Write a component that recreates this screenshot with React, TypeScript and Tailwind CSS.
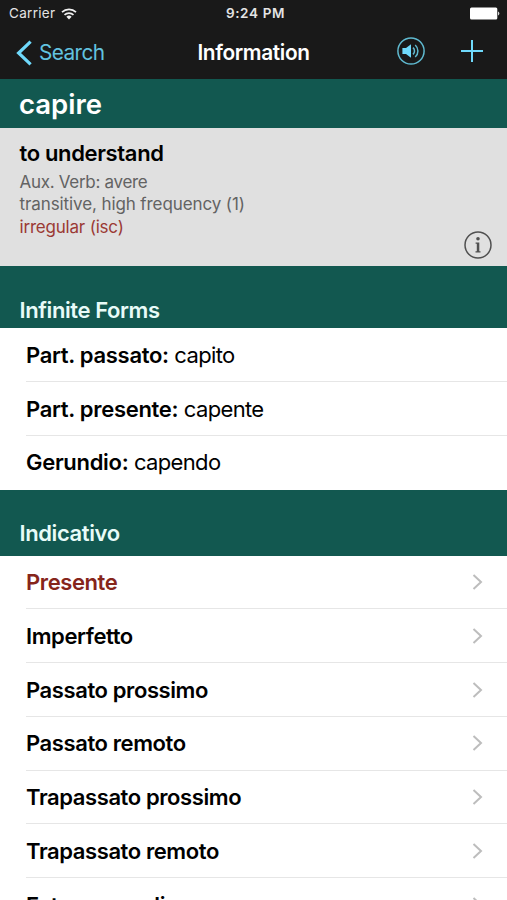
import type { ReactNode } from "react";

const infiniteForms = [
  { label: "Part. passato:", value: "capito" },
  { label: "Part. presente:", value: "capente" },
  { label: "Gerundio:", value: "capendo" },
];

const tenses = [
  { name: "Presente", irregular: true },
  { name: "Imperfetto" },
  { name: "Passato prossimo" },
  { name: "Passato remoto" },
  { name: "Trapassato prossimo" },
  { name: "Trapassato remoto" },
  { name: "Futuro semplice" },
];

const StatusBar = () => (
  <div className="grid h-[27px] grid-cols-[1fr_auto_1fr] items-center pl-[9px] pr-[7px] text-[13.5px] leading-none text-[#e4e4e4]">
    <div className="flex items-center gap-[6px]">
      <span className="tracking-[0.3px]">Carrier</span>
      <svg width="16" height="12" viewBox="0 0 16 12" fill="none" stroke="#f0f0f0" strokeWidth="1.7">
        <path d="M1 4.2a10.2 10.2 0 0 1 14 0" />
        <path d="M3.5 6.8a6.6 6.6 0 0 1 9 0" />
        <path d="M8 11.4 5.4 8.7a3.8 3.8 0 0 1 5.2 0Z" fill="#f0f0f0" stroke="none" />
      </svg>
    </div>
    <span className="pl-[2px] pt-px text-center font-semibold tracking-[0.65px]">9:24 PM</span>
    <svg className="justify-self-end" width="30" height="13" viewBox="0 0 30 13" fill="#fff">
      <rect x="0" y="0.5" width="27.3" height="12" rx="1.5" />
      <path d="M28.2 4.5a2.4 2.4 0 0 1 0 4Z" />
    </svg>
  </div>
);

const NavBar = () => (
  <div className="grid h-[52px] grid-cols-[1fr_auto_1fr] items-center pl-4 pr-[24px] text-[20.8px] leading-none">
    <div className="flex items-center gap-[7px] text-[#62c3e0]">
      <svg className="mb-[1px]" width="16" height="26" viewBox="0 0 16 26" fill="none" stroke="#6fd9fb" strokeWidth="3.2">
        <path d="M14.6 1.6 2.6 13l12 11.4" />
      </svg>
      <span className="tracking-[-0.6px]">Search</span>
    </div>
    <span className="pl-[8px] text-center font-semibold tracking-[-0.35px] text-white">Information</span>
    <div className="mb-[4px] flex items-center justify-end gap-[36px]">
      <svg width="28" height="28" viewBox="0 0 28 28" fill="none" stroke="#5fb9cf" strokeWidth="1.5">
        <circle cx="14" cy="14" r="13.1" />
        <path d="M5.4 11h3.6L14 7.2v13.6L9 17H5.4Z" fill="#6fd9fb" stroke="none" />
        <path d="M16 10.6a4.6 4.6 0 0 1 0 6.8" />
        <path d="M18.2 8a8 8 0 0 1 0 12" />
      </svg>
      <svg width="22" height="22" viewBox="0 0 22 22" stroke="#6fd9fb" strokeWidth="2">
        <path d="M0 11h22M11 0v22" />
      </svg>
    </div>
  </div>
);

const Chevron = () => (
  <svg width="12" height="16" viewBox="0 0 12 16" fill="none" stroke="#bdbdbd" strokeWidth="2">
    <path d="M1.5 1 9 8l-7.5 7" />
  </svg>
);

const SectionTitle = ({ children }: { children: ReactNode }) => (
  <h3 className="pl-[19.5px] text-[22px] font-semibold leading-[27px] tracking-[-0.4px] text-[#e8fbf8]">
    {children}
  </h3>
);

const Row = ({ children }: { children: ReactNode }) => (
  <li className="ml-[26px] flex h-[53.75px] items-center justify-between border-b border-[#e6e6e6] pr-[23px] last:border-transparent">
    {children}
  </li>
);

export default function App() {
  return (
    <div className="h-[900px] w-[507px] overflow-hidden bg-white font-['Inter','Liberation_Sans',sans-serif] text-black">
      <header className="bg-[#191919]">
        <StatusBar />
        <NavBar />
      </header>

      <div className="flex h-[49px] items-center bg-[#125850] pl-[19px] pt-[2px] text-[27.5px] font-semibold leading-none text-white">
        <h1>capire</h1>
      </div>

      {/* Translation and grammar notes */}
      <section className="flex h-[137.5px] justify-between bg-[#e0e0e0] pl-[19.5px] pr-[15px]">
        <div className="pt-[12px] text-[17px] leading-[22px] tracking-[-0.2px] text-[#636363]">
          <h2 className="mb-[5px] text-[22px] font-semibold leading-[26px] tracking-[-0.35px] text-black">
            to understand
          </h2>
          <p className="tracking-[-0.3px]">Aux. Verb: avere</p>
          <p className="tracking-[-0.1px]">transitive, high frequency (1)</p>
          <p className="leading-[24px] text-[#9b3a35]">irregular (isc)</p>
        </div>
        <svg className="mb-[6.5px] self-end" width="28" height="28" viewBox="0 0 28 28">
          <circle cx="14" cy="14" r="13" fill="none" stroke="#505050" strokeWidth="1.5" />
          <circle cx="14" cy="7.8" r="1.8" fill="#505050" />
          <path d="M11.6 11.6h3.7v8.7h1.2v1.2h-5v-1.2h1.3v-7.5h-1.2Z" fill="#505050" />
        </svg>
      </section>

      <div className="flex h-[62.9px] flex-col justify-end bg-[#125850] pb-[4.9px]">
        <SectionTitle>Infinite Forms</SectionTitle>
      </div>
      <ul>
        {infiniteForms.map((form) => (
          <Row key={form.label}>
            <p className="text-[22px] leading-none tracking-[-0.65px]">
              <b className="font-semibold tracking-[-0.3px]">{form.label}</b> {form.value}
            </p>
          </Row>
        ))}
      </ul>

      <div className="flex h-[66px] flex-col justify-end bg-[#125850] pb-[8.4px]">
        <SectionTitle>Indicativo</SectionTitle>
      </div>
      <ul>
        {tenses.map((tense) => (
          <Row key={tense.name}>
            <span
              className={`text-[22px] font-semibold leading-none tracking-[-0.4px] ${tense.irregular ? "text-[#86251b]" : ""}`}
            >
              {tense.name}
            </span>
            <Chevron />
          </Row>
        ))}
      </ul>
    </div>
  );
}
